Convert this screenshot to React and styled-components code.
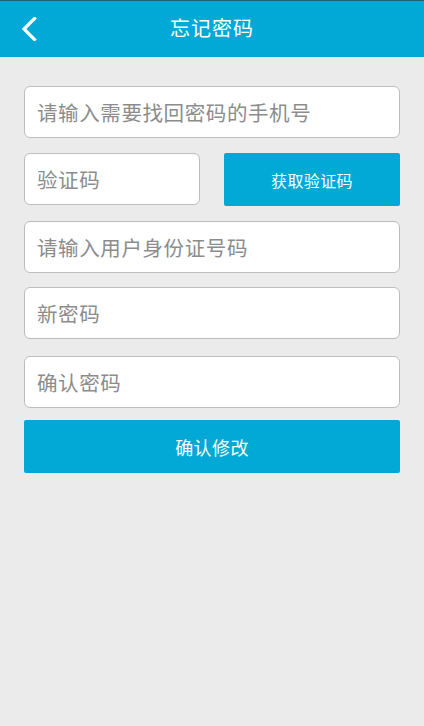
import React from "react";
import styled, { createGlobalStyle } from "styled-components";

const Global = createGlobalStyle`
  html, body { margin: 0; padding: 0; background: #ebebeb; }
  body { font-family: "Noto Sans CJK SC", "Noto Sans", sans-serif; }
  * { box-sizing: border-box; }
`;

const Page = styled.div`
  width: 424px;
  min-height: 726px;
  background: #ebebeb;
  display: flex;
  flex-direction: column;
`;

const Header = styled.header`
  height: 57px;
  background: #02a9d6;
  border-top: 1px solid #1b5f73;
  display: grid;
  grid-template-columns: 60px 1fr 60px;
  align-items: center;
  color: #fff;
`;

const Back = styled.button`
  background: none;
  border: none;
  padding: 0 0 0 21px;
  height: 100%;
  display: flex;
  align-items: center;
  cursor: pointer;
`;

const Title = styled.h1`
  margin: 0;
  font-size: 20px;
  font-weight: 400;
  text-align: center;
  letter-spacing: 1px;
  line-height: 1;
  padding-bottom: 2px;
`;

const Form = styled.form`
  display: flex;
  flex-direction: column;
  padding: 29px 24px 0 24px;
`;

const Row = styled.div`
  display: flex;
  gap: 24px;
  margin-bottom: ${(p) => p.$mb ?? 16}px;
`;

const Field = styled.input`
  flex: ${(p) => (p.$half ? "0 0 176px" : "1 1 auto")};
  width: 100%;
  height: 52px;
  border: 1px solid #bdbdbd;
  border-radius: 6px;
  background: #fff;
  padding: 0 0 0 12px;
  font-family: "Noto Sans CJK SC", "Noto Sans", sans-serif;
  font-size: 20.5px;
  letter-spacing: 0.6px;
  color: #333;
  outline: none;
  &::placeholder { color: #8c8c8c; }
`;

const Btn = styled.button`
  flex: 1 1 auto;
  height: ${(p) => p.$h || 53}px;
  background: #02a9d6;
  border: none;
  border-radius: 2px;
  color: #fff;
  font-family: "Noto Sans CJK SC", "Noto Sans", sans-serif;
  font-size: ${(p) => p.$fs || 18}px;
  letter-spacing: 0.4px;
  cursor: pointer;
  padding: 0;
`;

export default function App() {
  return (
    <Page>
      <Global />
      <Header>
        <Back aria-label="返回">
          <svg width="16" height="24" viewBox="0 0 16 24">
            <path d="M13.5 1.5 L3 12 L13.5 22.5" fill="none" stroke="#fff" strokeWidth="3.2" strokeLinecap="square" />
          </svg>
        </Back>
        <Title>忘记密码</Title>
        <span />
      </Header>
      <Form onSubmit={(e) => e.preventDefault()}>
        <Row $mb={15}>
          <Field placeholder="请输入需要找回密码的手机号" autoFocus />
        </Row>
        <Row $mb={15}>
          <Field $half placeholder="验证码" />
          <Btn type="button" $fs={16}>获取验证码</Btn>
        </Row>
        <Row $mb={14}>
          <Field placeholder="请输入用户身份证号码" />
        </Row>
        <Row $mb={17}>
          <Field placeholder="新密码" />
        </Row>
        <Row $mb={12}>
          <Field placeholder="确认密码" />
        </Row>
        <Row>
          <Btn type="submit" $fs={18}>确认修改</Btn>
        </Row>
      </Form>
    </Page>
  );
}
